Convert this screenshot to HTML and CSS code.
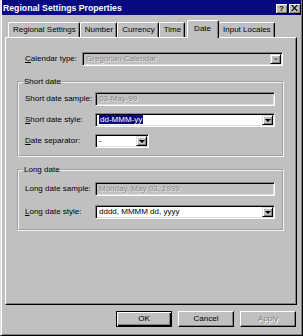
FILE: index.html
```html
<!DOCTYPE html>
<html lang="en">

<head>
    <meta charset="UTF-8">
    <title>Regional Settings Properties</title>
    <link rel="stylesheet" href="styles.css">
</head>

<body>
    <div class="dialog">
        <div class="titlebar">
            <span class="title">Regional Settings Properties</span>
            <div class="caption-btns">
                <span class="cbtn">?</span>
                <span class="cbtn">
                    <svg width="7" height="6" viewBox="0 0 7 6">
                        <path d="M0 0h1.6l1.9 2.2 1.9-2.2h1.6l-2.7 3 2.7 3h-1.6l-1.9-2.2-1.9 2.2h-1.6l2.7-3z" fill="#000" />
                    </svg>
                </span>
            </div>
        </div>

        <div class="content">
            <div class="tabs">
                <span class="tab">Regional Settings</span>
                <span class="tab">Number</span>
                <span class="tab">Currency</span>
                <span class="tab">Time</span>
                <span class="tab active">Date</span>
                <span class="tab">Input Locales</span>
            </div>

            <div class="panel">
                <div class="row cal-row">
                    <span class="label cal-label"><u>C</u>alendar type:</span>
                    <div class="field combo disabled cal-combo">
                        <span class="value">Gregorian Calendar</span>
                        <span class="arrow"><span class="tri"></span></span>
                    </div>
                </div>

                <fieldset class="group short">
                    <legend>Short date</legend>
                    <div class="row">
                        <span class="label">Short date sample:</span>
                        <div class="field disabled wide">
                            <span class="value">03-May-99</span>
                        </div>
                    </div>
                    <div class="row gap7">
                        <span class="label"><u>S</u>hort date style:</span>
                        <div class="field combo wide">
                            <span class="value"><span class="sel">dd-MMM-yy</span></span>
                            <span class="arrow"><span class="tri"></span></span>
                        </div>
                    </div>
                    <div class="row gap7">
                        <span class="label"><u>D</u>ate separator:</span>
                        <div class="field combo narrow">
                            <span class="value">-</span>
                            <span class="arrow"><span class="tri"></span></span>
                        </div>
                    </div>
                </fieldset>

                <fieldset class="group long">
                    <legend>Long date</legend>
                    <div class="row">
                        <span class="label">Long date sample:</span>
                        <div class="field disabled wide">
                            <span class="value">Monday, May 03, 1999</span>
                        </div>
                    </div>
                    <div class="row gap9">
                        <span class="label"><u>L</u>ong date style:</span>
                        <div class="field combo wide">
                            <span class="value">dddd, MMMM dd, yyyy</span>
                            <span class="arrow"><span class="tri"></span></span>
                        </div>
                    </div>
                </fieldset>
            </div>

            <div class="buttons">
                <span class="btn default">OK</span>
                <span class="btn">Cancel</span>
                <span class="btn off">Apply</span>
            </div>
        </div>
    </div>
</body>

</html>
```

FILE: styles.css
```css
* {
    margin: 0;
    padding: 0;
    box-sizing: border-box;
}

body {
    background-color: #c0c0c0;
    font-family: "Liberation Sans", Arial, sans-serif;
    font-size: 8px;
    line-height: 10px;
    color: #000;
}

.dialog {
    width: 303px;
    height: 336px;
    background-color: #c0c0c0;
    border-left: 1px solid #dfdfdf;
    border-right: 1px solid #000;
    border-bottom: 1px solid #000;
    box-shadow: inset 1px 0 #fff, inset -1px -1px #808080;
    padding: 0 1px 1px 1px;
}

/* title bar */
.titlebar {
    height: 15px;
    background-color: #0a0a80;
    color: #fff;
    display: flex;
    align-items: center;
    justify-content: space-between;
    padding-left: 1px;
}

.title {
    font-weight: bold;
    font-size: 8.7px;
}

.caption-btns {
    display: flex;
    gap: 1px;
    margin-top: 2px;
}

.cbtn {
    width: 12px;
    height: 10px;
    background-color: #c0c0c0;
    color: #000;
    font-weight: bold;
    font-size: 8px;
    line-height: 9px;
    text-align: center;
    display: flex;
    align-items: center;
    justify-content: center;
    border-right: 1px solid #000;
    border-bottom: 1px solid #000;
    box-shadow: inset 1px 1px #fff, inset -1px -1px #808080;
}

/* tabs + panel */
.content {
    padding: 5px 4px 0 3px;
}

.tabs {
    display: flex;
    align-items: flex-end;
    height: 18px;
    margin-bottom: -1px;
    padding-left: 3px;
}

.tab {
    height: 15px;
    margin-bottom: 1px;
    padding: 2px 3px 0 4px;
    border-top: 1px solid #fff;
    border-left: 1px solid #fff;
    border-right: 1px solid #000;
    border-radius: 2px 2px 0 0;
    box-shadow: inset -1px 0 #808080;
    white-space: nowrap;
}

.tab.active {
    position: relative;
    z-index: 1;
    height: 18px;
    margin: 0 -1px 0 2px;
    padding: 3px 7px 0 6px;
    background-color: #c0c0c0;
}

.panel {
    height: 268px;
    padding: 14px 0 0 11px;
    border-top: 1px solid #fff;
    border-left: 1px solid #fff;
    border-right: 1px solid #000;
    border-bottom: 1px solid #000;
    box-shadow: inset -1px -1px #808080;
}

.row {
    display: flex;
    align-items: center;
    height: 14px;
}

.gap7 {
    margin-top: 7px;
}

.gap9 {
    margin-top: 9px;
}

.label {
    width: 70px;
    white-space: nowrap;
}

.cal-label {
    width: 57px;
    margin-left: 8px;
}

/* group boxes */
.group {
    width: 267px;
    border: 2px groove #f4f4f4;
    min-width: 0;
}

.group legend {
    margin-left: -2px;
    padding: 0 1px;
}

.short {
    margin-top: 11px;
    padding: 5px 0 7px 6px;
}

.long {
    margin-top: 8px;
    padding: 7px 0 10px 6px;
}

/* edit fields and combos */
.field {
    height: 14px;
    display: flex;
    align-items: center;
    background-color: #fff;
    border-top: 1px solid #808080;
    border-left: 1px solid #808080;
    border-right: 1px solid #fff;
    border-bottom: 1px solid #fff;
    box-shadow: inset 1px 1px #000, inset -1px -1px #dfdfdf;
    padding: 1px;
}

.field .value {
    flex: 1;
    padding-left: 2px;
    white-space: nowrap;
    overflow: hidden;
}

.field.disabled {
    background-color: #c0c0c0;
    color: #8a8a8a;
}

.field.disabled .value {
    text-shadow: 1px 1px #e8e8e8;
}

.wide {
    width: 180px;
}

.narrow {
    width: 54px;
}

.cal-combo {
    width: 201px;
}

.sel {
    background-color: #0a0a80;
    color: #fff;
    padding: 0 1px;
}

.arrow {
    width: 11px;
    height: 10px;
    background-color: #c0c0c0;
    display: flex;
    align-items: center;
    justify-content: center;
    border-top: 1px solid #dfdfdf;
    border-left: 1px solid #dfdfdf;
    border-right: 1px solid #000;
    border-bottom: 1px solid #000;
    box-shadow: inset 1px 1px #fff, inset -1px -1px #808080;
}

.tri {
    width: 0;
    height: 0;
    border-left: 3px solid transparent;
    border-right: 3px solid transparent;
    border-top: 3px solid #000;
}

.disabled .tri {
    border-top-color: #808080;
}

/* bottom buttons */
.buttons {
    display: flex;
    justify-content: flex-end;
    gap: 6px;
    margin-top: 6px;
    padding-right: 1px;
}

.btn {
    width: 56px;
    height: 16px;
    display: flex;
    align-items: center;
    justify-content: center;
    border-top: 1px solid #fff;
    border-left: 1px solid #fff;
    border-right: 1px solid #000;
    border-bottom: 1px solid #000;
    box-shadow: inset -1px -1px #808080;
}

.btn.default {
    border: 1px solid #000;
    box-shadow: inset 1px 1px #fff, inset -1px -1px #000, inset -2px -2px #808080;
}

.btn.off {
    color: #808080;
    text-shadow: 1px 1px #fff;
}
```
